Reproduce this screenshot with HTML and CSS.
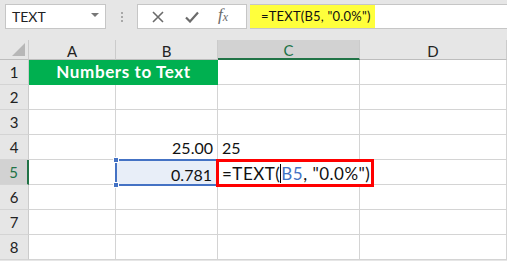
FILE: index.html
```html
<html><head>
	<meta charset="utf-8">
	<title>TEXT function</title>
	<link rel="stylesheet" href="styles.css">
</head>
<body>
	<div class="app">
		<!-- formula bar -->
		<div class="toolbar">
			<div class="namebox">
				<span>TEXT</span>
				<span class="caret"></span>
			</div>
			<div class="grip"><i></i><i></i><i></i></div>
			<div class="buttons">
				<svg width="12" height="12" viewBox="0 0 12 12"><path d="M1 1L11 11M11 1L1 11" stroke="#6b6b6b" stroke-width="1.6" fill="none"/></svg>
				<svg width="14" height="12" viewBox="0 0 14 12"><path d="M1 6.5L5 10.5L13 1.5" stroke="#6b6b6b" stroke-width="2.2" fill="none"/></svg>
				<span class="fx">f<sub>x</sub></span>
			</div>
			<div class="formula">
				<span class="hl">=TEXT(B5, "0.0%")</span>
			</div>
		</div>

		<!-- sheet -->
		<div class="sheet">
			<div class="hd corner"><span class="tri"></span></div>
			<div class="hd col">A</div>
			<div class="hd col">B</div>
			<div class="hd col sel">C</div>
			<div class="hd col">D</div>

			<div class="hd row">1</div>
			<div class="cell title">Numbers to Text</div>
			<div class="cell"></div>
			<div class="cell"></div>

			<div class="hd row">2</div>
			<div class="cell"></div><div class="cell"></div><div class="cell"></div><div class="cell"></div>

			<div class="hd row">3</div>
			<div class="cell"></div><div class="cell"></div><div class="cell"></div><div class="cell"></div>

			<div class="hd row">4</div>
			<div class="cell"></div>
			<div class="cell num">25.00</div>
			<div class="cell">25</div>
			<div class="cell"></div>

			<div class="hd row sel">5</div>
			<div class="cell"></div>
			<div class="cell num ref">0.781<span class="h h1"></span><span class="h h2"></span></div>
			<div class="cell edit">
				<div class="editbox">=TEXT(<span class="cur"></span><span class="blue">B5</span>, "0.0%")</div>
			</div>
			<div class="cell"></div>

			<div class="hd row">6</div>
			<div class="cell"></div><div class="cell"></div><div class="cell"></div><div class="cell"></div>

			<div class="hd row">7</div>
			<div class="cell"></div><div class="cell"></div><div class="cell"></div><div class="cell"></div>

			<div class="hd row">8</div>
			<div class="cell"></div><div class="cell"></div><div class="cell"></div><div class="cell"></div>
		</div>
	</div>
</body></html>
```

FILE: styles.css
```css
* {
	margin: 0;
	padding: 0;
	box-sizing: border-box;
}

body {
	width: 507px;
	height: 261px;
	overflow: hidden;
	background: #e6e6e6;
	font-family: Lato, "Open Sans", sans-serif;
	color: #111;
}

.toolbar {
	height: 40px;
	padding-top: 4px;
	display: flex;
	align-items: flex-start;
}

.namebox {
	width: 101px;
	height: 25px;
	margin-left: 5px;
	background: #fff;
	border: 1px solid #c6c6c6;
	display: flex;
	align-items: center;
	justify-content: space-between;
	padding: 0 6px 0 6px;
	font-size: 14px;
	color: #222;
}
.caret {
	border-left: 4px solid transparent;
	border-right: 4px solid transparent;
	border-top: 4px solid #777;
	margin-top: -3px;
}

.grip {
	width: 31px;
	height: 25px;
	display: flex;
	flex-direction: column;
	align-items: center;
	justify-content: center;
	gap: 2px;
}
.grip i {
	width: 2px;
	height: 2px;
	background: #a8a8a8;
}

.buttons {
	width: 110px;
	height: 25px;
	background: #fff;
	border: 1px solid #c6c6c6;
	display: flex;
	align-items: center;
	padding-left: 14px;
	gap: 21px;
}
.fx {
	font-family: "Liberation Serif", serif;
	font-style: italic;
	font-size: 17px;
	color: #6b6b6b;
	margin-left: -2px;
	margin-top: -4px;
}
.fx sub {
	font-size: 12px;
	vertical-align: -1px;
}

.formula {
	flex: 1;
	height: 25px;
	margin-left: 3px;
	background: #fff;
	border-top: 1px solid #c6c6c6;
	border-bottom: 1px solid #c6c6c6;
	font-size: 13px;
	letter-spacing: 0.2px;
}
.hl {
	display: inline-block;
	height: 23px;
	width: 125px;
	background: #ffff3c;
	padding: 3px 0 0 11px;
}

.sheet {
	display: grid;
	grid-template-columns: 29px 87px 102px 142px 147px;
	grid-template-rows: 20px repeat(8, 25px);
}

.hd {
	background: #e6e6e6;
	border-right: 1px solid #cbcbcb;
	border-bottom: 1px solid #bdbdbd;
	display: flex;
	align-items: center;
	justify-content: center;
	font-size: 15px;
	color: #222;
}
.corner {
	position: relative;
}
.tri {
	position: absolute;
	right: 3px;
	bottom: 3px;
	border-left: 13px solid transparent;
	border-bottom: 13px solid #b7b7b7;
}
.hd.col {
	padding-top: 2px;
}
.hd.row {
	font-size: 15px;
	border-bottom-color: #d4d4d4;
}
.hd.col.sel {
	background: #d2d2d2;
	color: #217346;
	border-bottom: 2px solid #217346;
}
.hd.row.sel {
	background: #d2d2d2;
	color: #217346;
	border-right: 2px solid #217346;
}

.cell {
	background: #fff;
	border-right: 1px solid #d4d4d4;
	border-bottom: 1px solid #d4d4d4;
	font-size: 16px;
	padding: 3px 3px 0 4px;
	white-space: nowrap;
}
.title {
	grid-column: span 2;
	background: #00b050;
	color: #fff;
	font-weight: bold;
	font-size: 17px;
	letter-spacing: 0.6px;
	text-align: center;
	padding-top: 1px;
	border-color: #00b050;
}
.num {
	text-align: right;
	padding-right: 4px;
}

.ref {
	position: relative;
	background: #e8eef8;
	border: 2px solid #4472c4;
	margin: -1px 0 -1px -1px;
	padding-top: 4px;
}
.h {
	position: absolute;
	left: -4px;
	width: 6px;
	height: 6px;
	background: #4472c4;
	border: 1px solid #fff;
}
.h1 { top: -4px; }
.h2 { bottom: -4px; }

.edit {
	position: relative;
	overflow: visible;
	z-index: 1;
}
.editbox {
	position: absolute;
	left: -2px;
	top: -1px;
	width: 158px;
	height: 28px;
	border: 3px solid #ff0000;
	background: #fff;
	padding: 1px 0 0 3px;
	font-size: 17px;
	letter-spacing: 0.5px;
}
.cur {
	display: inline-block;
	width: 1px;
	height: 19px;
	background: #000;
	vertical-align: -3px;
}
.blue {
	color: #4472c4;
}
```
